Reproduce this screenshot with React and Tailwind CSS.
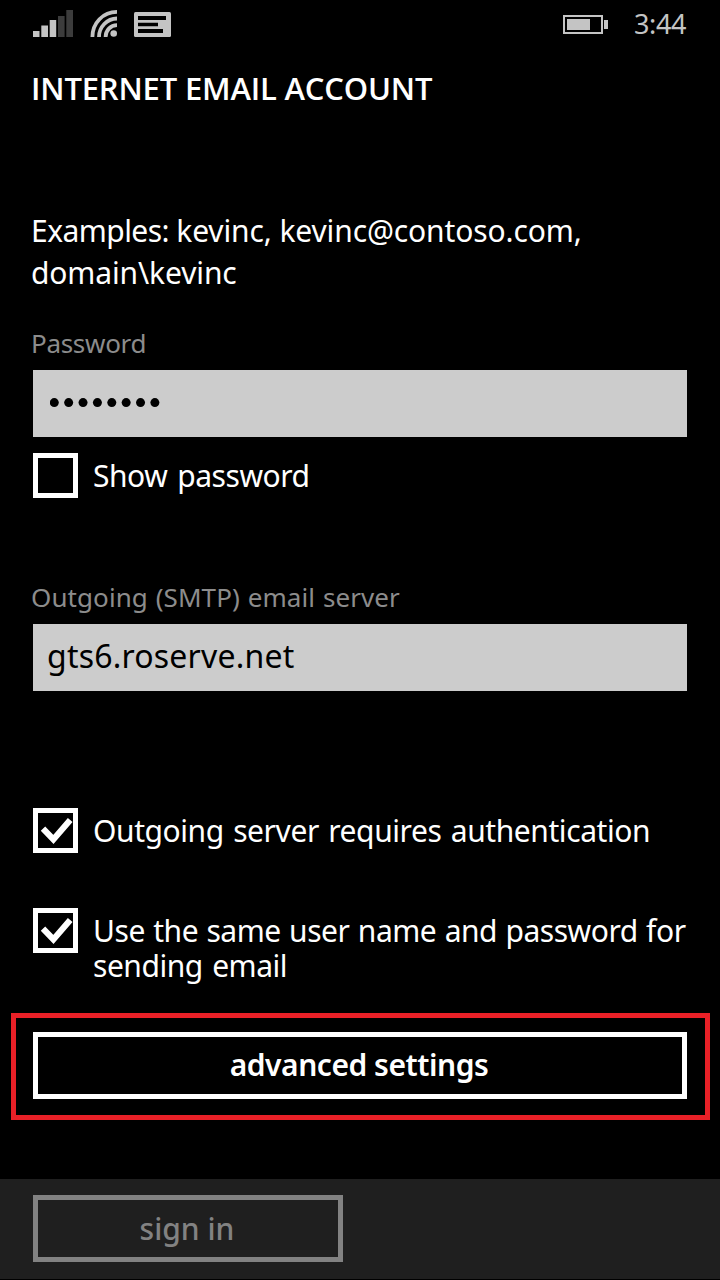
const check = (
  <svg className="block h-[35px] w-[35px]" viewBox="0 0 35 35" fill="none">
    <path d="M5 15.6 L15.4 26.4 L32.2 6.9" stroke="#fff" strokeWidth="6.2" />
  </svg>
);

function Box({ checked }) {
  return (
    <span className="block h-[45px] w-[45px] shrink-0 border-[5px] border-white">
      {checked ? check : null}
    </span>
  );
}

function StatusBar() {
  return (
    <header className="flex h-12 items-start pl-[33px] pr-[33px] text-[#c4c4c4]">
      <svg className="mt-[10px] block h-[27px] w-[40px]" viewBox="0 0 40 27">
        <g fill="#c4c4c4">
          <rect x="0" y="21" width="6.5" height="6" />
          <rect x="8.3" y="15.5" width="6.7" height="11.5" />
          <rect x="16.7" y="10" width="6.5" height="17" />
        </g>
        <g fill="#3c3c3c">
          <rect x="25" y="6" width="6.6" height="21" />
          <rect x="33.3" y="0" width="6.7" height="27" />
        </g>
      </svg>
      <svg className="ml-[17px] mt-[10px] block h-[27px] w-[27px]" viewBox="0 0 27 27">
        <g fill="none" stroke="#c4c4c4" strokeWidth="3.8">
          <path d="M2.4 27 C2.4 13 13 1.9 27 1.9" />
          <path d="M9 27 C9 17 17 8.5 27 8.5" />
          <path d="M15.6 27 C15.6 20.5 20.5 15.1 27 15.1" />
        </g>
        <circle cx="23.7" cy="23.5" r="3.3" fill="#c4c4c4" />
      </svg>
      <svg className="ml-[17px] mt-[12px] block h-[25px] w-[37px]" viewBox="0 0 37 25">
        <rect width="37" height="25" rx="1.5" fill="#c4c4c4" />
        <path d="M4 4h28v4H4zM4 10.7h20v3.6H4zM4 17h25v4H4z" fill="#000" />
      </svg>
      <svg className="ml-auto mt-[15px] block h-[19px] w-[45px]" viewBox="0 0 45 19">
        <rect x="1" y="1" width="38" height="17" fill="none" stroke="#c4c4c4" strokeWidth="2" />
        <rect x="4" y="4" width="23" height="11" fill="#c4c4c4" />
        <rect x="41" y="5" width="4" height="9" fill="#c4c4c4" />
      </svg>
      <span className="ml-[26px] mt-[4px] w-[53px] whitespace-nowrap text-[27px] leading-[40px] tracking-[-0.4px]">3:44</span>
    </header>
  );
}

export default function App() {
  return (
    <div className="flex h-[1280px] w-[720px] flex-col overflow-hidden bg-black font-['Noto_Sans','Open_Sans',sans-serif] text-[30px] text-white">
      <StatusBar />
      <main className="flex flex-1 flex-col">
        <h1 className="mt-[19px] whitespace-nowrap pl-[31px] font-['Open_Sans',sans-serif] text-[31px] font-semibold leading-[42px] tracking-[-0.18px]">
          INTERNET EMAIL ACCOUNT
        </h1>
        <p className="mt-[101px] whitespace-nowrap pl-[31px] leading-[42px] tracking-[-0.12px]">
          <span className="tracking-[-0.55px]">Examples: </span>
          kevinc, kevinc@contoso.com,
          <br />
          domain\kevinc
        </p>
        <label className="mt-[28px] h-[47px] pl-[31px] text-[26px] leading-[42px] tracking-[-0.3px] text-[#8c8c8c]">
          Password
        </label>
        <div className="mx-[33px] mt-px flex h-[67px] items-center bg-[#cccccc] pb-[2px] pl-[17px]">
          <svg className="block h-[10px] w-[112px]" viewBox="0 0 112 10">
            {[0, 1, 2, 3, 4, 5, 6, 7].map((i) => (
              <circle key={i} cx={4.3 + i * 14.37} cy="4.6" r="4.5" fill="#000" />
            ))}
          </svg>
        </div>
        <div className="ml-[33px] mt-[16px] flex h-[45px] gap-[15px]">
          <Box />
          <span className="mt-[2px] whitespace-nowrap leading-[42px] tracking-[-0.45px] [word-spacing:2.5px]">Show password</span>
        </div>
        <label className="mt-[78px] h-[47px] whitespace-nowrap pl-[31px] text-[26px] leading-[42px] tracking-[0.08px] text-[#8c8c8c] [word-spacing:1px]">
          Outgoing (SMTP) email server
        </label>
        <div className="mx-[33px] mt-px h-[67px] whitespace-nowrap bg-[#cccccc] pl-[14px] text-[32px] leading-[63px] tracking-[0.2px] text-black">
          gts6.roserve.net
        </div>
        <div className="ml-[33px] mt-[117px] flex h-[45px] gap-[15px]">
          <Box checked />
          <span className="mt-[2px] whitespace-nowrap leading-[42px] tracking-[-0.42px] [word-spacing:2px]">Outgoing server requires authentication</span>
        </div>
        <div className="ml-[33px] mt-[55px] flex h-[45px] gap-[15px]">
          <Box checked />
          <span className="mt-[5px] whitespace-nowrap leading-[35px] tracking-[-0.46px] [word-spacing:1px]">
            Use the same user name and password for
            <br />
            <span className="[word-spacing:2px]">sending email</span>
          </span>
        </div>
        <div className="ml-[11px] mr-[10px] mt-[60px] h-[107px] border-[5px] border-[#e92027] pl-[17px] pr-[18px] pt-[14px]">
          <button className="block h-[67px] w-full whitespace-nowrap border-[5px] border-white pb-[2px] pr-[2px] text-[30px] font-semibold leading-[55px] tracking-[-0.47px]">
            advanced settings
          </button>
        </div>
      </main>
      <footer className="mb-px h-[100px] bg-[#1f1f1f] pl-[33px] pt-[16px]">
        <button className="block h-[67px] w-[310px] whitespace-nowrap border-[5px] border-[#828282] text-[30px] font-medium leading-[55px] text-[#828282]">
          <span className="mr-[2px]">sign in</span>
        </button>
      </footer>
    </div>
  );
}
